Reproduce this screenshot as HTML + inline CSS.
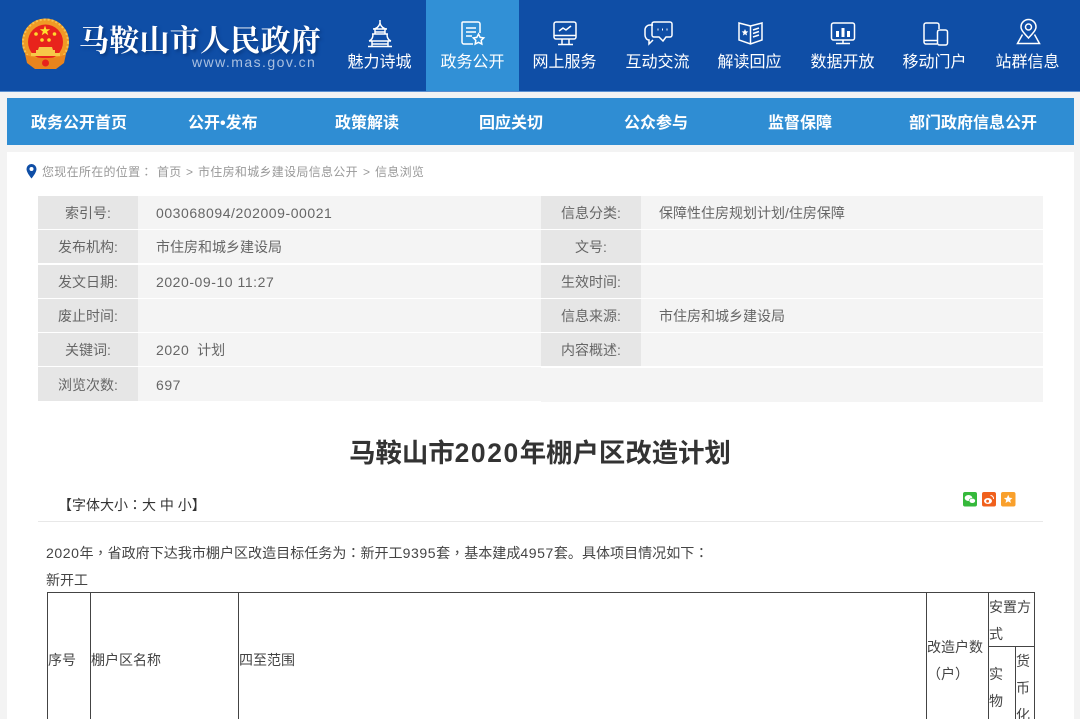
<!DOCTYPE html>
<html lang="zh-CN"><head><meta charset="utf-8"><title>马鞍山市2020年棚户区改造计划</title>
<style>
html,body{margin:0;padding:0;width:1080px;height:719px;overflow:hidden;background:#f3f3f3}
#w{position:absolute;left:0;top:0;width:1080px;height:719px;overflow:hidden;background:#f3f3f3;font-family:"Liberation Sans","Noto Sans CJK SC",sans-serif;color:#555}
#w div{position:absolute;white-space:nowrap}
.m{font-family:"Noto Sans CJK TC",sans-serif}
.d{letter-spacing:.55px}
svg{position:absolute;overflow:visible}
.hd{left:0;top:0;width:1080px;height:91px;background:#0f4ea6;border-bottom:1px solid #5a8fd0}
.act{left:426px;top:0;width:93px;height:91px;background:#3190d6}
.lb{top:53px;width:93px;text-align:center;color:#fff;font-size:16px;line-height:20px}
.ic{fill:none;stroke:#fff;stroke-width:1.5}
.nav{left:7px;top:98px;width:1067px;height:47px;background:#2f8dd3}
.nv{top:113px;color:#fff;font-size:16px;font-weight:bold;line-height:22px}
.main{left:7px;top:152px;width:1067px;height:567px;background:#fff}
.c1{background:#e6e6e6;height:33px;width:100px;text-align:center;font-size:14px;line-height:35px;color:#666}
.c2{background:#f4f4f4;height:33px;font-size:14px;line-height:35px;color:#666;box-sizing:border-box;padding-left:18px}
.t{font-size:14px;line-height:20px;color:#444}
.b{background:#444}
.bc{top:163px;font-size:12px;line-height:18px;color:#999;letter-spacing:.3px}
</style></head><body><div id="w">
<div class="hd"></div><div class="act"></div>
<svg style="left:21px;top:18px" width="50" height="52" viewBox="21 18 50 52">
<circle cx="45.500" cy="42" r="23.500" fill="#f09a25"/>
<circle cx="45.500" cy="42" r="22.500" fill="none" stroke="#f6c350" stroke-width="2" stroke-dasharray="2 2"/>
<circle cx="45.500" cy="42" r="17.500" fill="#e8231c"/>
<path d="M45 25.500l1.300 3.700h3.900l-3.100 2.300 1.200 3.800-3.300-2.300-3.300 2.300 1.200-3.800-3.100-2.300h3.900z" fill="#ffe02e"/>
<circle cx="36" cy="34" r="1.800" fill="#ffd92e"/><circle cx="54.500" cy="34" r="1.800" fill="#ffd92e"/><circle cx="42" cy="40" r="1.800" fill="#ffd92e"/><circle cx="49" cy="40" r="1.800" fill="#ffd92e"/>
<path d="M39 47h13l1 3h2v4H36v-4h2z" fill="#f7c948"/>
<path d="M25 54c5 3 12 4 20.500 4s15.500-1 20.500-4l-2 9-8 6H35l-8-6z" fill="#e9841d"/>
<rect x="31" y="53" width="29" height="3" fill="#f7c948"/><circle cx="45.500" cy="63" r="3.500" fill="#e8231c"/>
</svg>
<div style="left:79px;top:18px;font-family:'Noto Serif CJK SC',serif;font-size:30px;font-weight:bold;line-height:40px;color:#fff;letter-spacing:.25px;text-shadow:2px 2px 3px #0a3a80">马鞍山市人民政府</div>
<div style="left:192px;top:54px;font-size:14px;line-height:16px;color:#a9c0e0;letter-spacing:1.45px">www.mas.gov.cn</div>

<svg class="ic" style="left:367px;top:20px" width="26" height="27" viewBox="0 0 26 27" stroke-width="1.300"><path d="M13 0v3M6 9c3 0 6-2 7-6 1 4 4 6 7 6M6 9h14M8 9v5M18 9v5M8 12h10M5 14h16M2 21c3-1 4-4 4-7M24 21c-3-1-4-4-4-7M2 21h22M5 21v5M21 21v5M1 26.500h24M5 24h16"/></svg>
<svg class="ic" style="left:461px;top:21px" width="24" height="25" viewBox="0 0 24 25"><path d="M12 23H3a2 2 0 0 1-2-2V2a1 1 0 0 1 1-1h15a2 2 0 0 1 2 2v9M5 7h10M5 11h10M5 15h6"/><path d="M17.500 13l1.700 3.400 3.500.5-2.500 2.500.6 3.600-3.300-1.700-3.300 1.700.6-3.600-2.500-2.500 3.500-.5z"/></svg>
<svg class="ic" style="left:553px;top:21px" width="25" height="25" viewBox="0 0 25 25"><rect x="1" y="1" width="22" height="17" rx="2"/><path d="M1 14.500h22M6 10l4-3 3 2 5-4M9 18v5M16 18v5M5 23.500h15"/></svg>
<svg class="ic" style="left:644px;top:21px" width="29" height="25" viewBox="0 0 29 25"><path d="M9 4H6a5 5 0 0 0-5 5v5c0 3 2 5 4 5v4l4-4"/><path d="M10 1h16a2 2 0 0 1 2 2v11a2 2 0 0 1-2 2h-4l-3 4-4-4h-5a2 2 0 0 1-2-2V3a2 2 0 0 1 2-2z"/><path d="M13.500 8.500h1M18 8.500h1M22.500 8.500h1" stroke-width="2"/></svg>
<svg class="ic" style="left:738px;top:22px" width="25" height="23" viewBox="0 0 25 23"><path d="M12.500 4L1 1v17l11.500 4 11.500-4V1zM12.500 4v18M15 8l6-2M15 11.500l6-2M15 15l6-2"/><path d="M7 7l1 2.300 2.300.2-1.800 1.600.6 2.400L7 12.200l-2.100 1.300.6-2.400-1.800-1.600 2.300-.2z" fill="#fff" stroke="none"/></svg>
<svg class="ic" style="left:830px;top:22px" width="26" height="23" viewBox="0 0 26 23"><rect x="1.500" y="1" width="23" height="17" rx="2"/><path d="M13 18v3M6 21.500h14"/><path d="M7.500 9v6M13 6v9M18.500 9v6" stroke-width="3"/></svg>
<svg class="ic" style="left:923px;top:22px" width="26" height="24" viewBox="0 0 26 24"><path d="M14 22H3a2 2 0 0 1-2-2V3a2 2 0 0 1 2-2h11a2 2 0 0 1 2 2v4"/><path d="M1 18.500h13"/><rect x="14.500" y="8" width="10" height="15" rx="2"/></svg>
<svg class="ic" style="left:1016px;top:19px" width="25" height="26" viewBox="0 0 25 26"><path d="M12.500 19C8 14 5 11 5 8a7.500 7.500 0 0 1 15 0C20 11 17 14 12.500 19z"/><circle cx="12.500" cy="8" r="3"/><path d="M6.500 15.500L1.500 24.500h22l-5-9"/></svg>

<div class="lb" style="left:333px">魅力诗城</div>
<div class="lb" style="left:426px">政务公开</div>
<div class="lb" style="left:518px">网上服务</div>
<div class="lb" style="left:611px">互动交流</div>
<div class="lb" style="left:703px">解读回应</div>
<div class="lb" style="left:796px">数据开放</div>
<div class="lb" style="left:888px">移动门户</div>
<div class="lb" style="left:981px">站群信息</div>

<div class="nav"></div>
<div class="nv" style="left:31px">政务公开首页</div>
<div class="nv" style="left:188px">公开•发布</div>
<div class="nv" style="left:335px">政策解读</div>
<div class="nv" style="left:479px">回应关切</div>
<div class="nv" style="left:624px">公众参与</div>
<div class="nv" style="left:768px">监督保障</div>
<div class="nv" style="left:909px">部门政府信息公开</div>

<div class="main"></div>
<svg style="left:26px;top:164px" width="11" height="15" viewBox="0 0 11 15"><path fill-rule="evenodd" d="M5.500 0A5 5 0 0 1 10.500 5C10.500 8 7.500 12 5.500 14.500 3.500 12 .5 8 .5 5A5 5 0 0 1 5.500 0zM5.500 3a2 2 0 1 0 0 4 2 2 0 0 0 0-4z" fill="#0f4ea6"/></svg>
<div class="bc" style="left:42px">您现在所在的位置<span class="m" lang="zh-TW">：</span></div>
<div class="bc" style="left:157px">首页</div>
<div class="bc" style="left:186px">&gt;</div>
<div class="bc" style="left:198px">市住房和城乡建设局信息公开</div>
<div class="bc" style="left:363px">&gt;</div>
<div class="bc" style="left:375px">信息浏览</div>

<div class="c1" style="left:38px;top:196px">索引号:</div><div class="c2 d" style="left:138px;top:196px;width:403px">003068094/202009-00021</div>
<div class="c1" style="left:541px;top:196px;width:100px">信息分类:</div><div class="c2" style="left:641px;top:196px;width:402px">保障性住房规划计划/住房保障</div>
<div class="c1" style="left:38px;top:230px">发布机构:</div><div class="c2" style="left:138px;top:230px;width:403px">市住房和城乡建设局</div>
<div class="c1" style="left:541px;top:230px">文号:</div><div class="c2" style="left:641px;top:230px;width:402px"></div>
<div class="c1" style="left:38px;top:265px">发文日期:</div><div class="c2 d" style="left:138px;top:265px;width:403px">2020-09-10 11:27</div>
<div class="c1" style="left:541px;top:265px">生效时间:</div><div class="c2" style="left:641px;top:265px;width:402px"></div>
<div class="c1" style="left:38px;top:299px">废止时间:</div><div class="c2" style="left:138px;top:299px;width:403px"></div>
<div class="c1" style="left:541px;top:299px">信息来源:</div><div class="c2" style="left:641px;top:299px;width:402px">市住房和城乡建设局</div>
<div class="c1" style="left:38px;top:333px">关键词:</div><div class="c2" style="left:138px;top:333px;width:403px;white-space:pre"><span class="d">2020</span>  计划</div>
<div class="c1" style="left:541px;top:333px">内容概述:</div><div class="c2" style="left:641px;top:333px;width:402px"></div>
<div class="c1" style="left:38px;top:367px;height:34px;line-height:36px">浏览次数:</div><div class="c2 d" style="left:138px;top:367px;width:403px;height:34px;line-height:36px">697</div>
<div class="c2" style="left:541px;top:368px;width:502px;height:34px"></div>

<div style="left:38px;width:1004px;top:435px;text-align:center;font-size:26.4px;font-weight:bold;line-height:36px;color:#333">马鞍山市<span style="letter-spacing:1.6px">2020</span>年棚户区改造计划</div>
<div class="t" style="left:58px;top:495px;color:#333">【字体大小<span class="m" lang="zh-TW">：</span>大 中 小】</div>
<div style="left:38px;top:521px;width:1005px;height:1px;background:#e8e8e8"></div>

<svg style="left:963px;top:492px" width="14" height="15"><rect width="14" height="14.500" rx="2" fill="#35b93b"/><ellipse cx="5.500" cy="6" rx="3.800" ry="3" fill="#fff"/><ellipse cx="9.300" cy="8.800" rx="3.200" ry="2.500" fill="#fff" stroke="#35b93b" stroke-width=".6"/></svg>
<svg style="left:982px;top:492px" width="14" height="15"><rect width="14" height="14.500" rx="2" fill="#f0601c"/><ellipse cx="6" cy="9" rx="4" ry="3" fill="#fff"/><circle cx="5.600" cy="9.200" r="1.400" fill="#f0601c"/><path d="M8.500 3.500a3 3 0 0 1 3 3.500" stroke="#fff" fill="none"/></svg>
<svg style="left:1001px;top:492px" width="15" height="15"><rect width="14.500" height="14.500" rx="2" fill="#f9a02c"/><path d="M7.200 2.800l1.300 2.900 3 .3-2.300 2 .7 3-2.700-1.600-2.700 1.600.7-3-2.300-2 3-.3z" fill="#fff"/></svg>

<div class="t" style="left:46px;top:543px;font-size:14.05px"><span class="d">2020</span>年<span class="m" lang="zh-TW">，</span>省政府下达我市棚户区改造目标任务为<span class="m" lang="zh-TW">：</span>新开工<span class="d">9395</span>套<span class="m" lang="zh-TW">，</span>基本建成<span class="d">4957</span>套。具体项目情况如下<span class="m" lang="zh-TW">：</span></div>
<div class="t" style="left:46px;top:570px">新开工</div>

<div class="b" style="left:47px;top:592px;width:988px;height:1px"></div>
<div class="b" style="left:47px;top:592px;width:1px;height:127px"></div>
<div class="b" style="left:90px;top:592px;width:1px;height:127px"></div>
<div class="b" style="left:238px;top:592px;width:1px;height:127px"></div>
<div class="b" style="left:926px;top:592px;width:1px;height:127px"></div>
<div class="b" style="left:988px;top:592px;width:1px;height:127px"></div>
<div class="b" style="left:1034px;top:592px;width:1px;height:127px"></div>
<div class="b" style="left:988px;top:646px;width:47px;height:1px"></div>
<div class="b" style="left:1015px;top:646px;width:1px;height:73px"></div>

<div class="t" style="left:48px;top:650px">序号</div>
<div class="t" style="left:91px;top:650px">棚户区名称</div>
<div class="t" style="left:239px;top:650px">四至范围</div>
<div class="t" style="left:927px;top:637px">改造户数</div>
<div class="t m" lang="zh-TW" style="left:927px;top:664px">（户）</div>
<div class="t" style="left:989px;top:597px">安置方</div>
<div class="t" style="left:989px;top:624px">式</div>
<div class="t" style="left:989px;top:664px">实</div>
<div class="t" style="left:989px;top:691px">物</div>
<div class="t" style="left:1016px;top:651px">货</div>
<div class="t" style="left:1016px;top:678px">币</div>
<div class="t" style="left:1016px;top:705px">化</div>
</div></body></html>
